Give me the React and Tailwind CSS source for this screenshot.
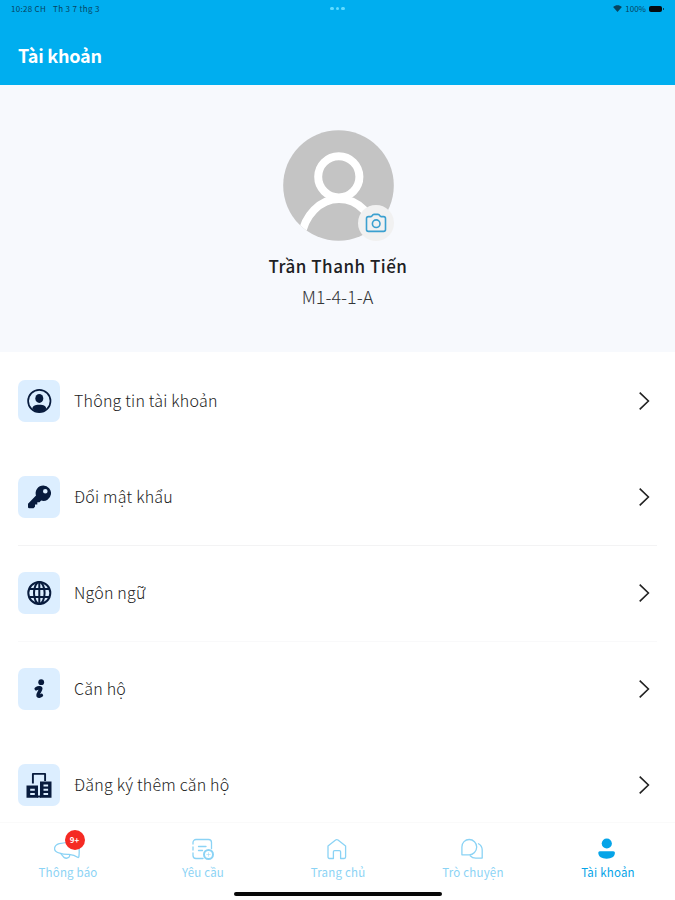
import clsx from "clsx";

const UserCircleIcon = () => (
  <svg viewBox="0 0 26 26" className="size-[26px]" fill="none">
    <circle cx="13.300" cy="13" r="11.200" stroke="currentColor" strokeWidth="1.700" />
    <ellipse cx="13.300" cy="10.400" rx="4" ry="4.500" fill="currentColor" />
    <path
      d="M6.300 20.600c.3-2.600 2.400-3.900 7-3.900s6.700 1.300 7 3.900c-2 2.300-4.300 3.600-7 3.600s-5-1.300-7-3.600Z"
      fill="currentColor"
    />
  </svg>
);

const KeyIcon = () => (
  <svg viewBox="0 0 24 24" className="size-6" fill="currentColor">
    <path
      fillRule="evenodd"
      d="M16.300 0.500a7.700 7.700 0 1 1-2.100 15.100l-1.700 1.700h-2.200v2.300H8v2.100l-1.500 1.500H2.200a1.200 1.200 0 0 1-1.200-1.200v-3.200L9 10.600A7.700 7.700 0 0 1 16.300.500ZM18.300 4a2.300 2.300 0 1 0 0 4.600 2.300 2.300 0 0 0 0-4.600Z"
    />
  </svg>
);

const GlobeIcon = () => (
  <svg
    viewBox="0 0 26 26"
    className="size-[26px]"
    fill="none"
    stroke="currentColor"
    strokeWidth="2"
  >
    <circle cx="13.300" cy="13" r="11" />
    <ellipse cx="13.300" cy="13" rx="5.300" ry="11" />
    <path d="M13.300 2v22M3.600 9H23M3.600 17H23" />
  </svg>
);

const InfoIcon = () => (
  <svg viewBox="0 0 12 20" className="w-3 h-5" fill="none">
    <circle cx="8.200" cy="3.200" r="2.900" fill="currentColor" />
    <path
      d="M3.200 9.800c2-1 4.600-1.500 4.600-.2 0 2-3.400 5.200-2.800 7 .4 1.100 2 .7 3.400-.2"
      stroke="currentColor"
      strokeWidth="3.500"
      strokeLinecap="round"
      strokeLinejoin="round"
    />
  </svg>
);

const BuildingsIcon = () => (
  <svg viewBox="0 0 26 26" className="size-[26px]" fill="none">
    <path
      d="M6.900 11.500V1.900h12.200v7"
      stroke="currentColor"
      strokeWidth="1.900"
      strokeLinejoin="round"
    />
    <path
      fillRule="evenodd"
      d="M.5 13.500h11.500v12.300H.5ZM4.200 16.700v2h4.600v-2ZM4.200 20.900v2h4.600v-2ZM14 9.500h11.500v16.300H14ZM17.500 12.500v2h4.600v-2ZM17.500 16.700v2h4.600v-2ZM17.500 20.900v2h4.600v-2Z"
      fill="currentColor"
    />
    <path d="M11 24.500h4" stroke="currentColor" strokeWidth="2" />
  </svg>
);

const MegaphoneIcon = () => (
  <svg
    viewBox="0 0 28 22"
    className="w-7 h-[22px]"
    fill="none"
    stroke="currentColor"
    strokeWidth="1.300"
    strokeLinejoin="round"
    strokeLinecap="round"
  >
    <path d="M24.800 6.500c.5 4.200.6 8.200.1 12.200-.1.800-.7 1-1.300.6-2.200-1.700-5-2.600-8.600-2.900-3.600.1-6.500-.2-9.200-1.200C2.500 14.300.4 12.600.6 10.300c.2-2.300 1.900-3.900 4.600-4.700 5.300-.7 9.800-1.500 14.300-3.100" />
    <path d="m6.800 15.600 3.100 3.800c1.500 1 3.800.9 5-.1.800-.8.900-1.700.9-2.700" />
  </svg>
);

const RequestIcon = () => (
  <svg
    viewBox="0 0 24 24"
    className="size-6"
    fill="none"
    stroke="currentColor"
    strokeWidth="1.300"
    strokeLinecap="round"
  >
    <path d="M2 7V5.500A3 3 0 0 1 5 2.500h12.500a3 3 0 0 1 3 3v6.200M2 10v3M2 16v2.500a3 3 0 0 0 3 3h7M7.500 9.500h7.500M7.500 13.500h4" />
    <circle cx="17.500" cy="17.500" r="4.500" strokeWidth="2" />
    <path d="M15.800 17.500h3.400M17.500 15.800v3.400" strokeWidth="1" opacity=".5" />
  </svg>
);

const HomeIcon = () => (
  <svg
    viewBox="0 0 24 24"
    className="size-6"
    fill="none"
    stroke="currentColor"
    strokeWidth="1.300"
    strokeLinejoin="round"
  >
    <path d="M2 8.900 9.600 3a2 2 0 0 1 2.400 0l7.600 5.900v11.200c0 .8-.6 1.400-1.400 1.400h-3.600v-6.700c0-.7-.5-1.200-1.200-1.200H8.600c-.7 0-1.200.5-1.200 1.200v6.700H3.400c-.8 0-1.400-.6-1.400-1.400Z" />
  </svg>
);

const ChatIcon = () => (
  <svg
    viewBox="0 0 24 24"
    className="size-6"
    fill="none"
    stroke="currentColor"
    strokeWidth="1.300"
    strokeLinejoin="round"
    strokeLinecap="round"
  >
    <path d="M.9 17.800V9.900C.9 5.700 4.100 2.500 8.200 2.500s7.500 3.300 7.500 7.500-3.400 7.800-7.500 7.800Z" />
    <path d="M17.500 6.800c2.300 1.300 3.700 3.600 3.700 6.300v8h-6.400c-2.300 0-4.300-.9-5.600-2.400" />
  </svg>
);

const UserSolidIcon = () => (
  <svg viewBox="0 0 24 24" className="size-6" fill="currentColor">
    <circle cx="10.800" cy="6.500" r="5.100" />
    <path d="M3.800 14.200h13.400c1.200 0 1.700.7 1.700 1.800-.2 3.700-3.400 5.700-8.300 5.700S2.500 19.700 2.300 16c0-1.100.5-1.800 1.500-1.800Z" />
  </svg>
);

const ChevronIcon = () => (
  <svg
    viewBox="0 0 12 20"
    className="ml-auto w-3 h-5"
    fill="none"
    stroke="#222"
    strokeWidth="1.600"
  >
    <path d="m1.700 1.600 8.700 8.400-8.700 8.400" />
  </svg>
);

const StatusBar = () => (
  <div className="flex h-[17px] items-center px-[11px] text-[8px] leading-none text-[#07445f]">
    <div className="flex flex-1 gap-[7px] whitespace-pre">
      <span className="tracking-[0.3px]">10:28 CH</span>
      <span className="tracking-[0.35px]">Th 3 7 thg 3</span>
    </div>
    <div className="flex gap-[2px]">
      <i className="size-[3.500px] rounded-full bg-[#62dcff]" />
      <i className="size-[3.500px] rounded-full bg-[#62dcff]" />
      <i className="size-[3.500px] rounded-full bg-[#62dcff]" />
    </div>
    <div className="flex flex-1 items-center justify-end gap-[3px]">
      <svg viewBox="0 0 10 8" className="w-[9px] h-[7px]" fill="currentColor">
        <path d="M0 2.300C2.900-.3 7.100-.3 10 2.300L5 8Z" />
      </svg>
      <span>100%</span>
      <div className="flex items-center gap-px">
        <i className="h-[6px] w-[13px] rounded-[2px] bg-[#050b10]" />
        <i className="h-[2px] w-px bg-[#07445f]" />
      </div>
    </div>
  </div>
);

const Avatar = () => (
  <div className="relative ml-px size-[111px]">
    <svg viewBox="0 0 111 111" className="size-full">
      <defs>
        <clipPath id="avatar">
          <circle cx="55.500" cy="55.500" r="55.300" />
        </clipPath>
      </defs>
      <g clipPath="url(#avatar)" fill="none" stroke="#fff" strokeWidth="8">
        <path d="M0 0h111v111H0Z" fill="#c4c4c4" stroke="none" />
        <circle cx="55.800" cy="46.800" r="20.600" />
        <path d="M18.500 106c3-20 18-37 37.500-37s34 16 37 37" />
      </g>
    </svg>
    <div className="absolute left-[75px] top-[75px] flex size-[36px] items-center justify-center rounded-full bg-[#f1f1f1] text-[#3ba0d0]">
      <svg
        viewBox="0 0 22 20"
        className="w-[22px] h-5"
        fill="none"
        stroke="currentColor"
        strokeWidth="1.600"
        strokeLinejoin="round"
      >
        <path d="M3.400 3.600h2.500c.7 0 1-.3 1.300-.9.400-.8.900-1.300 1.800-1.300h4c.9 0 1.400.5 1.800 1.300.3.600.6.900 1.300.9h2.500c1.100 0 1.900.8 1.900 1.900v11c0 1.100-.8 1.900-1.900 1.900H3.400c-1.100 0-1.900-.8-1.900-1.900v-11c0-1.100.8-1.900 1.900-1.900Z" />
        <circle cx="11.200" cy="10.700" r="3.800" />
      </svg>
    </div>
  </div>
);

const menuItems = [
  { label: "Thông tin tài khoản", icon: <UserCircleIcon /> },
  { label: "Đổi mật khẩu", icon: <KeyIcon /> },
  { label: "Ngôn ngữ", icon: <GlobeIcon />, divider: true },
  { label: "Căn hộ", icon: <InfoIcon />, faintDivider: true },
  { label: "Đăng ký thêm căn hộ", icon: <BuildingsIcon /> },
];

const tabs = [
  { label: "Thông báo", icon: <MegaphoneIcon />, badge: "9+" },
  { label: "Yêu cầu", icon: <RequestIcon /> },
  { label: "Trang chủ", icon: <HomeIcon /> },
  { label: "Trò chuyện", icon: <ChatIcon /> },
  { label: "Tài khoản", icon: <UserSolidIcon />, active: true },
];

export default function App() {
  return (
    <div className="flex h-[900px] w-[675px] flex-col overflow-hidden bg-white font-['Noto_Sans_CJK_SC','Noto_Sans',sans-serif]">
      <header className="h-[85px] shrink-0 bg-[#00aeef]">
        <StatusBar />
        <h1 className="mt-[24px] px-[18px] text-[18px] leading-7 font-bold tracking-[-0.2px] text-white">
          Tài khoản
        </h1>
      </header>

      <section className="flex h-[267px] shrink-0 flex-col items-center bg-[#f7f9fd] pt-[45px]">
        <Avatar />
        <h2 className="mt-[11px] ml-px text-[17px] leading-7 font-medium tracking-[0.5px] text-[#202124]">
          Trần Thanh Tiến
        </h2>
        <p className="mt-[2px] text-[18px] leading-7 font-light text-[#333538]">
          M1-4-1-A
        </p>
      </section>

      <ul className="min-h-0 flex-1 overflow-hidden px-[18px] pt-px">
        {menuItems.map(({ label, icon, divider, faintDivider }) => (
          <li
            key={label}
            className={clsx(
              "flex h-24 items-center border-t pr-[7px] pb-[2px]",
              divider
                ? "border-[#f3f3f4]"
                : faintDivider
                  ? "border-[#f9f9fa]"
                  : "border-transparent"
            )}
          >
            <span className="flex size-[42px] items-center justify-center rounded-[7px] bg-[#dceeff] text-[#081b3d]">
              {icon}
            </span>
            <span className="ml-[14px] pb-[2px] text-[16px] font-light tracking-[0.21px] text-[#222]">
              {label}
            </span>
            <ChevronIcon />
          </li>
        ))}
      </ul>

      <nav className="h-[78px] shrink-0 border-t border-[#fafafa]">
        <div className="grid grid-cols-5 pt-[14px]">
          {tabs.map(({ label, icon, badge, active }) => (
            <div
              key={label}
              className={clsx(
                "flex flex-col items-center",
                active ? "text-[#06a4e8]" : "text-[#8bd3f5]"
              )}
            >
              <div className="relative flex h-6 items-center">
                {icon}
                {badge && (
                  <span className="absolute -top-[7px] left-[11px] flex size-5 items-center justify-center rounded-full bg-[#f52a23] text-[8px] font-bold text-white">
                    {badge}
                  </span>
                )}
              </div>
              <span className="mt-px ml-px text-[11.5px] leading-5 tracking-[0.2px]">
                {label}
              </span>
            </div>
          ))}
        </div>
        <div className="mx-auto mt-[10px] h-[4px] w-[208px] rounded-full bg-[#080808]" />
      </nav>
    </div>
  );
}
